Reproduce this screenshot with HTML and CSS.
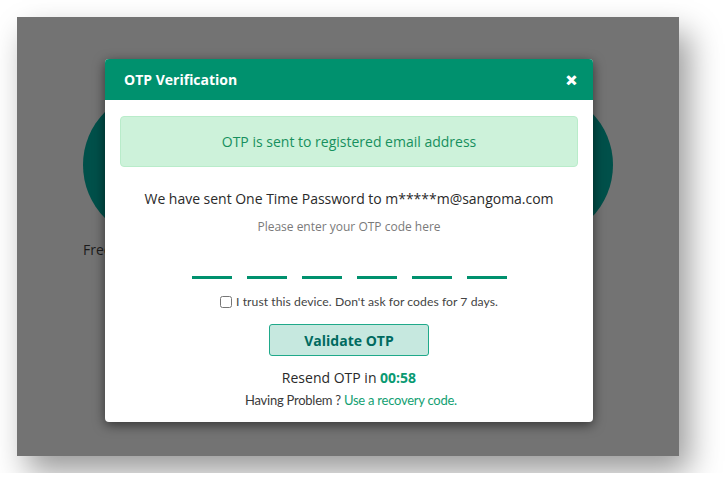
FILE: index.html
```html
<!DOCTYPE html>
<html>
<head>
<meta charset="utf-8">
<link rel="stylesheet" href="styles.css">
</head>
<body>
<div class="shot">
  <div class="backdrop">
    <div class="col">
      <div class="circle"></div>
      <div class="free">Free trial</div>
    </div>
    <div class="col">
      <div class="circle"></div>
    </div>
  </div>
  <div class="modal">
    <div class="modal-header">
      <span class="title">OTP Verification</span>
      <span class="close">&#x2715;</span>
    </div>
    <div class="modal-body">
      <div class="alert">OTP is sent to registered email address</div>
      <p class="sent">We have sent One Time Password to m*****m@sangoma.com</p>
      <p class="hint">Please enter your OTP code here</p>
      <div class="otp">
        <span class="digit"></span><span class="digit"></span><span class="digit"></span><span class="digit"></span><span class="digit"></span><span class="digit"></span>
      </div>
      <label class="trust"><input type="checkbox"> I trust this device. Don't ask for codes for 7 days.</label>
      <button class="validate">Validate OTP</button>
      <p class="resend">Resend OTP in <b>00:58</b></p>
      <p class="problem">Having Problem ? <a href="#">Use a recovery code.</a></p>
    </div>
  </div>
</div>
</body>
</html>
```
FILE: styles.css
```css
html, body { margin: 0; padding: 0; background: #ffffff; }
body { padding: 17px; font-family: "Open Sans", sans-serif; }
.shot {
  position: relative;
  width: 662px;
  height: 439px;
  background: #737373;
  box-shadow: 10px 16px 30px rgba(0,0,0,0.4);
  overflow: hidden;
}
.backdrop {
  display: flex;
  justify-content: space-between;
  padding: 73px 66px 0;
}
.col { display: flex; flex-direction: column; }
.circle { width: 150px; height: 150px; border-radius: 50%; background: #00504a; }
.free { margin-top: 0; font-size: 14px; color: #1c1c1c; }
.modal {
  position: absolute;
  left: 88px;
  top: 42px;
  width: 488px;
  background: #fff;
  border-radius: 4px;
  box-shadow: 0 3px 12px rgba(0,0,0,0.55);
  overflow: hidden;
}
.modal-header {
  height: 41px;
  background: #00916e;
  display: flex;
  align-items: center;
  justify-content: space-between;
  padding: 0 16px 0 19px;
  color: #fff;
}
.title { font-weight: 700; font-size: 14px; }
.close { font-size: 13px; font-weight: 700; -webkit-text-stroke: 1.2px #fff; }
.modal-body {
  padding: 16px 15px 14px;
  display: flex;
  flex-direction: column;
  align-items: center;
}
.alert {
  align-self: stretch;
  height: 49px;
  border: 1px solid #b9ecca;
  background: #cdf2da;
  border-radius: 4px;
  color: #17905e;
  font-size: 14px;
  display: flex;
  align-items: center;
  justify-content: center;
}
.sent { margin: 22px 0 0; font-size: 14px; color: #2a2a2a; letter-spacing: -0.02px; }
.hint { margin: 10px 0 0; font-size: 12px; color: #7a7a7a; }
.otp { display: flex; gap: 15px; margin-top: 41px; }
.digit { width: 40px; height: 3px; background: #00916e; }
.trust {
  margin: 15px 0 0 20px;
  font-family: Lato, sans-serif;
  font-size: 12.2px;
  letter-spacing: 0.05px;
  color: #444;
  display: flex;
  align-items: center;
  gap: 4px;
}
.trust input { margin: 0; width: 12px; height: 12px; }
.validate {
  margin-top: 15px;
  width: 160px;
  height: 32px;
  background: #c6e8df;
  border: 1px solid #1fa98a;
  border-radius: 3px;
  color: #006a5f;
  font-family: "Open Sans", sans-serif;
  font-weight: 700;
  font-size: 14px;
}
.resend { margin: 12px 0 0; font-size: 14px; color: #2a2a2a; }
.resend b { color: #0a9a72; }
.problem { margin: 5px 0 0 4px; font-family: Lato, sans-serif; font-size: 13px; color: #3a3a3a; letter-spacing: -0.25px; }
.problem a { color: #13a072; text-decoration: none; }
```
